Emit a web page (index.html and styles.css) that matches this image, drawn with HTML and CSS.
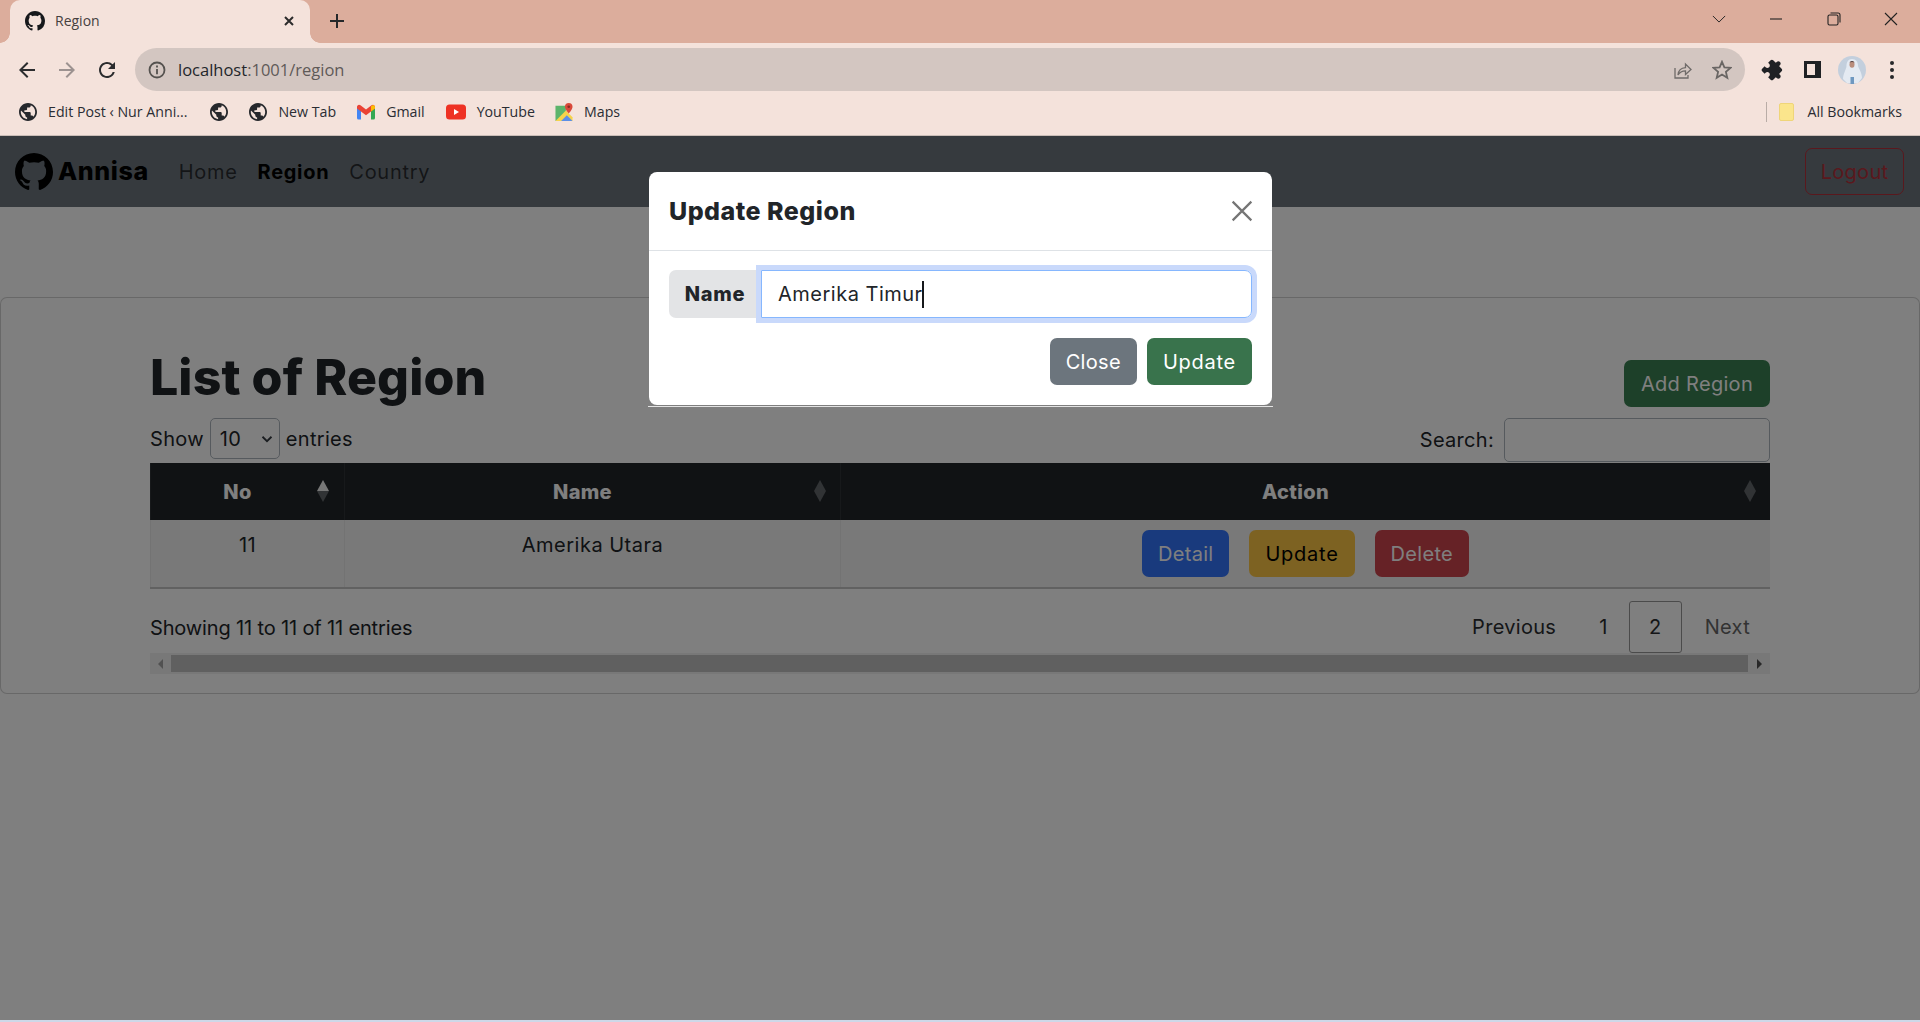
FILE: index.html
```html
<!DOCTYPE html>
<html>
  <head>
    <meta charset="UTF-8">
    <title>Region</title>
    <link rel="stylesheet" href="styles.css">
  </head>

  <body>
    <svg class="defs" width="0" height="0">
      <symbol id="globe" viewBox="2 2 20 20">
        <path d="M12 2C6.48 2 2 6.48 2 12s4.48 10 10 10 10-4.48 10-10S17.52 2 12 2zm-1 17.93c-3.95-.49-7-3.85-7-7.93 0-.62.08-1.21.21-1.79L9 15v1c0 1.1.9 2 2 2v1.93zm6.9-2.54c-.26-.81-1-1.39-1.9-1.39h-1v-3c0-.55-.45-1-1-1H8v-2h2c.55 0 1-.45 1-1V7h2c1.1 0 2-.9 2-2v-.41c2.93 1.19 5 4.06 5 7.41 0 2.08-.8 3.97-2.1 5.39z"/>
      </symbol>
      <symbol id="github" viewBox="0 0 16 16">
        <path d="M8 0C3.58 0 0 3.58 0 8c0 3.54 2.29 6.53 5.47 7.59.4.07.55-.17.55-.38 0-.19-.01-.82-.01-1.49-2.01.37-2.53-.49-2.69-.94-.09-.23-.48-.94-.82-1.13-.28-.15-.68-.52-.01-.53.63-.01 1.08.58 1.23.82.72 1.21 1.87.87 2.33.66.07-.52.28-.87.51-1.07-1.78-.2-3.64-.89-3.64-3.95 0-.87.31-1.59.82-2.15-.08-.2-.36-1.02.08-2.12 0 0 .67-.21 2.2.82.64-.18 1.32-.27 2-.27.68 0 1.36.09 2 .27 1.53-1.04 2.2-.82 2.2-.82.44 1.1.16 1.92.08 2.12.51.56.82 1.27.82 2.15 0 3.07-1.87 3.75-3.65 3.95.29.25.54.73.54 1.48 0 1.07-.01 1.93-.01 2.2 0 .21.15.46.55.38A8.013 8.013 0 0016 8c0-4.42-3.58-8-8-8z"/>
      </symbol>
      <symbol id="sort" viewBox="0 0 12 22">
        <path class="sort-top" d="M6 0l6 11H0z"/>
        <path d="M6 22l6-11H0z"/>
      </symbol>
    </svg>

    <!-- BROWSER -->
    <div class="tabstrip">
      <div class="tab">
        <svg class="tab-icon"><use href="#github"/></svg>
        <span class="tab-title">Region</span>
        <svg class="tab-close" viewBox="0 0 12 12"><path d="M2 2l8 8M10 2l-8 8"/></svg>
      </div>
      <svg class="new-tab" viewBox="0 0 16 16"><path d="M8 1v14M1 8h14"/></svg>
      <div class="window-controls">
        <div class="window-btn"><svg viewBox="0 0 16 10"><path d="M1 1.5l7 7 7-7"/></svg></div>
        <div class="window-btn"><svg viewBox="0 0 14 14"><path d="M1 7h12"/></svg></div>
        <div class="window-btn"><svg viewBox="0 0 14 14"><rect x="1" y="3" width="10" height="10" rx="1.5"/><path d="M3.5 1H11a2 2 0 012 2v7.5"/></svg></div>
        <div class="window-btn"><svg viewBox="0 0 14 14"><path d="M1 1l12 12M13 1L1 13"/></svg></div>
      </div>
    </div>

    <div class="toolbar">
      <div class="tool-btn"><svg viewBox="0 0 24 24"><path d="M20 11H7.83l5.59-5.59L12 4l-8 8 8 8 1.41-1.41L7.83 13H20v-2z"/></svg></div>
      <div class="tool-btn tool-off"><svg viewBox="0 0 24 24"><path d="M4 11h12.17l-5.59-5.59L12 4l8 8-8 8-1.41-1.41L16.17 13H4v-2z"/></svg></div>
      <div class="tool-btn"><svg viewBox="0 0 24 24"><path d="M17.65 6.35A7.958 7.958 0 0012 4c-4.42 0-7.99 3.58-7.99 8s3.57 8 7.99 8c3.73 0 6.84-2.55 7.73-6h-2.08A5.99 5.99 0 0112 18c-3.31 0-6-2.69-6-6s2.69-6 6-6c1.66 0 3.14.69 4.22 1.78L13 11h7V4l-2.35 2.35z"/></svg></div>
      <div class="address">
        <svg class="addr-info" viewBox="0 0 20 20"><circle cx="10" cy="10" r="7.5"/><path d="M10 9v5.2M10 5.6v1.8"/></svg>
        <span class="addr-text">localhost<span class="addr-path">:1001/region</span></span>
        <svg class="addr-share" viewBox="0 0 20 20"><path d="M3 8v10h13v-3"/><path d="M6 15c.4-4.500 3.500-7.200 7.500-7.400V4l5.500 5.500-5.500 5v-3.700c-3.200 0-5.800 1.200-7.500 4.200z"/></svg>
        <svg class="addr-star" viewBox="0 0 20 20"><path d="M10 1.800l2.400 5.600 6.100.5-4.600 4 1.400 5.900-5.300-3.200-5.300 3.200 1.400-5.900-4.600-4 6.100-.5z"/></svg>
      </div>
      <div class="tool-btn ext-btn"><svg viewBox="-2 0 24 24"><path transform="rotate(45 12 12)" d="M20.500 11H19V7c0-1.100-.9-2-2-2h-4V3.500C13 2.120 11.880 1 10.500 1S8 2.120 8 3.500V5H4c-1.100 0-1.990.9-1.990 2v3.800H3.500c1.490 0 2.700 1.210 2.700 2.700s-1.210 2.700-2.700 2.700H2V20c0 1.100.9 2 2 2h3.800v-1.500c0-1.490 1.210-2.700 2.700-2.700 1.490 0 2.700 1.210 2.700 2.700V22H17c1.100 0 2-.9 2-2v-4h1.500c1.380 0 2.500-1.120 2.500-2.500S21.880 11 20.500 11z"/></svg></div>
      <div class="tool-btn"><span class="side-panel"></span></div>
      <div class="tool-btn">
        <svg class="avatar" viewBox="0 0 28 28">
          <circle cx="14" cy="14" r="14" fill="#c3cfdd"/>
          <path d="M14 3c-4 0-5.500 3.500-5.500 7 0 3-3.500 8-3.500 13l4 4h11l4-5c0-5-3-9-4-12 0-4-2-7-6-7z" fill="#e4eaf2"/>
          <ellipse cx="14" cy="8.500" rx="2.500" ry="3.200" fill="#b98d7c"/>
          <path d="M11.500 6.500c1-2 4-2 5 0-1.500-.8-3.500-.8-5 0z" fill="#5e4a48"/>
          <rect x="12.500" y="21" width="3.500" height="7" fill="#6f98c0"/>
        </svg>
      </div>
      <div class="tool-btn"><span class="dots"><i></i><i></i><i></i></span></div>
    </div>

    <div class="bookmarks">
      <div class="bookmark bookmark-edit"><svg class="bm-icon"><use href="#globe"/></svg>Edit Post ‹ Nur Anni...</div>
      <div class="bookmark"><svg class="bm-icon"><use href="#globe"/></svg></div>
      <div class="bookmark"><svg class="bm-icon"><use href="#globe"/></svg>New Tab</div>
      <div class="bookmark">
        <svg class="bm-icon" viewBox="0 0 18 15">
          <path d="M0 2v11.500A1.500 1.500 0 001.500 15H4V6z" fill="#4285f4"/>
          <path d="M18 2v11.500a1.500 1.500 0 01-1.500 1.500H14V6z" fill="#34a853"/>
          <path d="M0 2.500C0 .5 2 -.5 3.500 .7L9 5l5.500-4.300C16 -.5 18 .5 18 2.500L18 4l-4 3-5 3.800L4 7 0 4z" fill="#ea4335"/>
          <path d="M14 1.800l2-1.200c1 .4 2 1 2 2V4l-4 3z" fill="#fbbc04"/>
        </svg>Gmail
      </div>
      <div class="bookmark bookmark-yt">
        <svg class="bm-icon bm-wide" viewBox="0 0 20 15">
          <rect width="20" height="15" rx="3.500" fill="#ee3224"/>
          <path d="M8 4.500v6l5-3z" fill="#fff"/>
        </svg>YouTube
      </div>
      <div class="bookmark">
        <svg class="bm-icon" viewBox="0 0 18 19">
          <path d="M0 3h11v13L0 19z" fill="#5cb46b"/>
          <path d="M0 19L11 8l7 7v4z" fill="#f6d34b"/>
          <path d="M6 19l6-6 6 6z" fill="#5a8fe8"/>
          <path d="M14 0a4 4 0 00-4 4c0 3 4 7 4 7s4-4 4-7a4 4 0 00-4-4z" fill="#d9493a"/>
          <circle cx="14" cy="4" r="1.400" fill="#8a2a22"/>
        </svg>Maps
      </div>
      <div class="bookmarks-end">
        <span class="bm-sep"></span>
        <span class="bm-folder"></span>
        All Bookmarks
      </div>
    </div>

    <!-- PAGE -->
    <div class="page">
      <nav class="navbar">
        <a class="brand"><svg class="brand-logo"><use href="#github"/></svg><span class="brand-name">Annisa</span></a>
        <a class="nav-link">Home</a>
        <a class="nav-link nav-active">Region</a>
        <a class="nav-link">Country</a>
        <a class="btn-logout">Logout</a>
      </nav>

      <div class="card">
        <div class="title-row">
          <h1>List of Region</h1>
          <a class="btn btn-success">Add Region</a>
        </div>

        <div class="controls">
          <div class="length">
            Show
            <div class="fake-select">10
              <svg viewBox="0 0 16 16"><path d="M2 5l6 6 6-6"/></svg>
            </div>
            entries
          </div>
          <div class="search">
            Search:
            <div class="fake-input"></div>
          </div>
        </div>

        <table class="region-table">
          <colgroup>
            <col class="col-no">
            <col class="col-name">
            <col class="col-action">
          </colgroup>
          <thead>
            <tr>
              <th>No<svg class="sort sort-asc"><use href="#sort"/></svg></th>
              <th>Name<svg class="sort"><use href="#sort"/></svg></th>
              <th>Action<svg class="sort"><use href="#sort"/></svg></th>
            </tr>
          </thead>
          <tbody>
            <tr>
              <td>11</td>
              <td class="cell-name">Amerika Utara</td>
              <td>
                <div class="row-actions">
                  <a class="btn btn-primary">Detail</a>
                  <a class="btn btn-warning">Update</a>
                  <a class="btn btn-danger">Delete</a>
                </div>
              </td>
            </tr>
          </tbody>
        </table>

        <div class="table-foot">
          <div class="info">Showing 11 to 11 of 11 entries</div>
          <div class="pagination">
            <a class="page-link">Previous</a>
            <a class="page-link page-one">1</a>
            <a class="page-link page-current">2</a>
            <a class="page-link page-off">Next</a>
          </div>
        </div>

        <div class="scrollbar">
          <span class="scroll-arrow scroll-left"></span>
          <span class="scroll-thumb"></span>
          <span class="scroll-arrow scroll-right"></span>
        </div>
      </div>

      <!-- MODAL -->
      <div class="backdrop">
        <div class="modal">
          <div class="modal-header">
            <h5>Update Region</h5>
            <svg class="modal-close" viewBox="0 0 20 20"><path d="M1.500 1.500l17 17M18.500 1.500l-17 17"/></svg>
          </div>
          <div class="modal-body">
            <div class="input-group">
              <span class="input-label">Name</span>
              <div class="input-focus">Amerika Timur<span class="caret"></span></div>
            </div>
          </div>
          <div class="modal-footer">
            <a class="btn btn-close">Close</a>
            <a class="btn btn-update">Update</a>
          </div>
        </div>
      </div>
    </div>
    <div class="window-edge"></div>
  </body>
</html>
```

FILE: styles.css
```css
/* CSS styles */
* {
  box-sizing: border-box;
}

html, body {
  height: 100%;
}

body {
  margin: 0;
  overflow: hidden;
  font-family: Inter, "Noto Sans", sans-serif;
  font-size: 20px;
  line-height: 30px;
  letter-spacing: 0.3px;
  color: #212529;
  background: #fff;
  display: flex;
  flex-direction: column;
}

.defs {
  position: absolute;
}

svg {
  display: block;
}

/* browser chrome */
.tabstrip {
  height: 43px;
  flex: none;
  display: flex;
  align-items: flex-start;
  padding-left: 10px;
  background: #dcad9c;
  font-family: "Open Sans", "Noto Sans", sans-serif;
  letter-spacing: 0;
}

.tab {
  position: relative;
  width: 300px;
  height: 43px;
  display: flex;
  align-items: center;
  padding: 0 15px 2px 15px;
  background: #f4e2db;
  border-radius: 10px 10px 0 0;
}

.tab::before,
.tab::after {
  content: "";
  position: absolute;
  bottom: 0;
  width: 10px;
  height: 10px;
  background: radial-gradient(circle at 0 0, #dcad9c 9.5px, #f4e2db 10px);
}

.tab::before {
  left: -10px;
}

.tab::after {
  right: -10px;
  background: radial-gradient(circle at 100% 0, #dcad9c 9.5px, #f4e2db 10px);
}

.tab-icon {
  width: 20px;
  height: 20px;
  fill: #16181b;
}

.tab-title {
  margin-left: 10px;
  font-size: 14px;
  color: #45403e;
}

.tab-close {
  width: 12px;
  height: 12px;
  margin-left: auto;
  fill: none;
  stroke: #2b2b2b;
  stroke-width: 2;
}

.new-tab {
  width: 16px;
  height: 16px;
  margin: 13px 0 0 19px;
  fill: none;
  stroke: #26282a;
  stroke-width: 2;
}

.window-controls {
  display: flex;
  margin-left: auto;
}

.window-btn {
  width: 57.5px;
  height: 38px;
  display: flex;
  align-items: center;
  justify-content: center;
}

.window-btn svg {
  width: 14px;
  height: 14px;
  fill: none;
  stroke: #222;
  stroke-width: 1.1;
}

.toolbar {
  height: 48px;
  flex: none;
  display: flex;
  align-items: center;
  padding: 5px 8px 0 7px;
  background: #f4e2db;
  letter-spacing: 0;
}

.tool-btn {
  width: 40px;
  height: 40px;
  flex: none;
  display: flex;
  align-items: center;
  justify-content: center;
}

.tool-btn svg {
  width: 24px;
  height: 24px;
  fill: #2b2c2e;
}

.tool-off svg {
  fill: #9c9290;
}

.ext-btn {
  margin-left: 7px;
}

.tool-btn.ext-btn svg {
  width: 22px;
  height: 22px;
  fill: #1f2124;
}

.address {
  flex: 1;
  height: 43px;
  margin-left: 8px;
  display: flex;
  align-items: center;
  padding: 0 13px 0 12px;
  background: #d3c6c1;
  border-radius: 22px;
  font-family: "Open Sans", "Noto Sans", sans-serif;
  font-size: 16.5px;
  color: #23262b;
}

.addr-info {
  width: 20px;
  height: 20px;
  fill: none;
  stroke: #55524f;
  stroke-width: 1.8;
}

.addr-text {
  margin-left: 11px;
}

.addr-path {
  color: #5f5a58;
}

.addr-share {
  width: 20px;
  height: 20px;
  margin-left: auto;
  fill: none;
  stroke: #6f6b69;
  stroke-width: 1.3;
}

.addr-star {
  width: 20px;
  height: 20px;
  margin-left: 20px;
  fill: none;
  stroke: #6a6664;
  stroke-width: 1.8;
}

.side-panel {
  width: 17px;
  height: 17px;
  background: #f4e2db;
  border: solid #1f2124;
  border-width: 3px 6px 3px 3px;
}

.tool-btn .avatar {
  width: 28px;
  height: 28px;
}

.dots {
  display: flex;
  flex-direction: column;
  gap: 3px;
}

.dots i {
  width: 4px;
  height: 4px;
  border-radius: 50%;
  background: #26282a;
}

.bookmarks {
  height: 45px;
  flex: none;
  display: flex;
  align-items: center;
  padding: 0 18px 3px 19px;
  background: #f4e2db;
  border-bottom: 1px solid #cabdb7;
  font-family: "Open Sans", "Noto Sans", sans-serif;
  font-size: 14.2px;
  letter-spacing: 0;
  color: #2a2d33;
}

.bookmark {
  display: flex;
  align-items: center;
  gap: 11px;
  margin-right: 21px;
}

.bookmark-edit {
  margin-right: 23px;
}

.bookmark-yt {
  margin-right: 20px;
}

.bm-icon {
  width: 18px;
  height: 18px;
  fill: #26282c;
}

.bm-wide {
  width: 20px;
}

.bookmarks-end {
  display: flex;
  align-items: center;
  margin-left: auto;
}

.bm-sep {
  width: 1px;
  height: 20px;
  background: #b9aca6;
}

.bm-folder {
  width: 15px;
  height: 18px;
  margin: 0 13px 0 12px;
  background: #fbe58c;
  border: 1px solid #efd579;
  border-radius: 2px;
}

/* page */
.page {
  position: relative;
  flex: 1;
  background: #fff;
}

.window-edge {
  height: 2px;
  flex: none;
  background: #cdd8e8;
}

.navbar {
  height: 71px;
  display: flex;
  align-items: center;
  padding: 0 16px 0 15px;
  background: #6c757d;
}

.brand {
  display: flex;
  align-items: center;
  gap: 5px;
  margin-right: 20px;
  font-size: 25px;
  font-weight: 800;
  letter-spacing: 0.6px;
  color: #000;
}

.brand-name {
  margin-top: -2px;
}

.brand-logo {
  width: 38px;
  height: 38px;
  fill: #000;
}

.nav-link {
  padding: 0 10px;
  letter-spacing: 0.7px;
  color: rgba(0, 0, 0, 0.65);
}

.nav-active {
  font-weight: 700;
  color: #000;
}

.btn-logout {
  width: 99px;
  height: 47px;
  margin-left: auto;
  display: flex;
  align-items: center;
  justify-content: center;
  border: 1px solid #b5303a;
  border-radius: 7px;
  color: #b5303a;
}

.card {
  margin-top: 90px;
  padding: 51px 149px 19px;
  background: #fff;
  border: 1px solid rgba(0, 0, 0, 0.18);
  border-radius: 7px;
}

.title-row {
  display: flex;
  justify-content: space-between;
  align-items: flex-end;
  margin-bottom: 11px;
}

h1 {
  margin: -2px 0 0;
  font-size: 50px;
  line-height: 60px;
  font-weight: 800;
  letter-spacing: 0.1px;
}

.btn {
  height: 47px;
  display: inline-flex;
  align-items: center;
  padding: 0 16px;
  border-radius: 7px;
  color: #fff;
}

.btn-success {
  padding: 0 17px;
  background: #3a8052;
}

.btn-primary {
  background: #3274fa;
}

.btn-warning {
  letter-spacing: 0.75px;
  background: #fbc444;
  color: #000;
}

.btn-danger {
  background: #cd444c;
}

.controls {
  height: 45px;
  display: flex;
  justify-content: space-between;
  align-items: flex-start;
}

.length,
.search {
  display: flex;
  align-items: center;
  gap: 6px;
  height: 41px;
}

.search {
  height: 44px;
  gap: 10px;
}

.fake-select {
  position: relative;
  width: 70px;
  height: 41px;
  padding: 5px 9px;
  border: 1px solid #adb5bd;
  border-radius: 5px;
}

.fake-select svg {
  position: absolute;
  top: 14px;
  right: 6px;
  width: 12px;
  height: 12px;
  fill: none;
  stroke: #343a40;
  stroke-width: 2.4;
}

.fake-input {
  width: 266px;
  height: 44px;
  border: 1px solid #adb5bd;
  border-radius: 5px;
}

.region-table {
  width: 100%;
  table-layout: fixed;
  border-collapse: collapse;
}

.col-no {
  width: 194px;
}

.col-name {
  width: 496px;
}

.region-table th {
  position: relative;
  height: 57px;
  padding: 0 30px 0 10px;
  background: #212529;
  color: #fff;
  font-weight: 800;
  text-align: center;
  border-left: 1px solid #2f3337;
}

.region-table td {
  height: 67px;
  padding: 10px;
  vertical-align: top;
  text-align: center;
  background: #f2f2f2;
  border-left: 1px solid #e6e6e6;
  border-bottom: 2px solid #c2c2c2;
}

.region-table .cell-name {
  letter-spacing: 0.5px;
}

.sort {
  --sort-top: #62666a;
  position: absolute;
  top: 17px;
  right: 14px;
  width: 12px;
  height: 22px;
  fill: #62666a;
}

.sort-asc {
  --sort-top: #eeeeee;
  right: 15px;
}

.sort-top {
  fill: var(--sort-top);
}

.row-actions {
  display: inline-flex;
  gap: 20px;
}

.table-foot {
  display: flex;
  justify-content: space-between;
  padding-top: 12px;
  height: 64px;
}

.info {
  margin-top: 12px;
  letter-spacing: -0.15px;
}

.pagination {
  display: flex;
  align-items: center;
  height: 52px;
}

.page-link {
  padding: 0 20px;
  color: #2a2d30;
}

.page-one {
  padding: 0 21px 0 23px;
}

.page-current {
  width: 53px;
  height: 52px;
  display: flex;
  align-items: center;
  justify-content: center;
  padding: 0;
  margin-right: 3px;
  border: 1px solid #979797;
  border-radius: 3px;
}

.page-off {
  color: #666;
}

.scrollbar {
  height: 21px;
  display: flex;
  align-items: center;
  background: #f1f1f1;
}

.scroll-arrow {
  width: 21px;
  display: flex;
  justify-content: center;
}

.scroll-arrow::before {
  content: "";
  border: 5px solid transparent;
}

.scroll-left::before {
  border-left-width: 0;
  border-right-color: #a3a3a3;
}

.scroll-right {
  margin-left: 1px;
}

.scroll-right::before {
  border-right-width: 0;
  border-left-color: #505050;
}

.scroll-thumb {
  flex: 1;
  height: 17px;
  background: #c1c1c1;
}

/* modal */
.backdrop {
  position: absolute;
  top: 0;
  left: 0;
  right: 0;
  bottom: 0;
  background: rgba(0, 0, 0, 0.5);
}

.modal {
  position: absolute;
  top: 36px;
  left: 649px;
  width: 623px;
  height: 233px;
  background: #fff;
  border-radius: 8px;
}

.modal::after {
  content: "";
  position: absolute;
  left: -1px;
  right: -1px;
  bottom: -2px;
  height: 1px;
  background: #e4e4e4;
}

.modal-header {
  height: 79px;
  display: flex;
  align-items: center;
  justify-content: space-between;
  padding: 0 20px;
  border-bottom: 1px solid #dee2e6;
}

h5 {
  margin: 0;
  font-size: 25px;
  font-weight: 800;
  letter-spacing: 0.5px;
}

.modal-close {
  width: 22px;
  height: 22px;
  margin-right: -1px;
  fill: none;
  stroke: #757575;
  stroke-width: 2;
}

.modal-body {
  padding: 19px 20px 0;
}

.input-group {
  display: flex;
  height: 48px;
}

.input-label {
  width: 92px;
  display: flex;
  align-items: center;
  justify-content: center;
  font-weight: 800;
  letter-spacing: 0.7px;
  background: #e3e4e6;
  border-radius: 7px 0 0 7px;
}

.input-focus {
  flex: 1;
  display: flex;
  align-items: center;
  padding-left: 16px;
  letter-spacing: 0.5px;
  border: 1px solid #86b7fe;
  border-radius: 0 7px 7px 0;
  box-shadow: 0 0 0 5px #c9d9fb;
}

.caret {
  width: 2px;
  height: 27px;
  margin-left: -1px;
  background: #16181b;
}

.modal-footer {
  display: flex;
  justify-content: flex-end;
  gap: 10px;
  padding: 20px 20px 0;
}

.btn-close {
  background: #6c757d;
}

.btn-update {
  letter-spacing: 0.75px;
  background: #39734c;
}
```
